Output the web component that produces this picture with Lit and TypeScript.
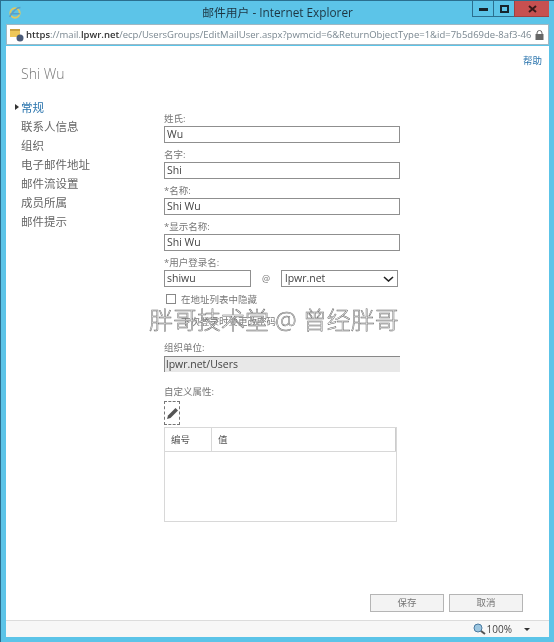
import { LitElement, html, css } from "lit";
import { customElement } from "lit/decorators.js";

const NAV = ["常规", "联系人信息", "组织", "电子邮件地址", "邮件流设置", "成员所属", "邮件提示"];

@customElement("app-root")
export class AppRoot extends LitElement {
  static styles = css`
    :host { display: block; width: 554px; height: 642px; font-family: "Open Sans", "Noto Sans CJK SC", sans-serif; color: #555; font-size: 10.5px; }
    * { box-sizing: border-box; }
    .win { position: relative; width: 554px; height: 642px; background: #5cc4e8; border: 1px solid #2b6f8f; border-width: 1px 0 0 1px; padding: 0 5px 5px 5px; display: flex; flex-direction: column; overflow: hidden; filter: blur(0.45px); }
    .title { height: 23px; flex: none; display: grid; grid-template-columns: 1fr auto 1fr; align-items: start; }
    .ie { margin: 5px 0 0 2px; }
    .title-text { font-size: 11.8px; line-height: 23px; color: #1d3542; }
    .ctrls { justify-self: end; display: flex; margin-right: 0; }
    .ctrl { height: 16px; width: 21px; border: 1px solid #2b6f8f; border-top: 0; border-right: 0; display: flex; align-items: center; justify-content: center; background: #5cc4e8; }
    .ctrl.close { width: 35px; background: #c75050; border-color: #a04040; }
    .addr { flex: none; height: 21px; background: #fff; border: 1px solid #9fb8c4; display: flex; align-items: center; padding: 0 4px 0 3px; gap: 2px; white-space: nowrap; overflow: hidden; font-size: 9.5px; color: #7a8790; }
    .addr b { font-weight: 600; color: #333; }
    .url { flex: 1; overflow: hidden; }
    .page { flex: 1; background: #fff; margin-top: 1px; display: flex; flex-direction: column; min-height: 0; }
    .help-row { display: flex; justify-content: flex-end; padding: 8px 7px 0 0; font-size: 9.5px; line-height: 13px; color: #2a74ad; }
    .name { font-size: 14px; line-height: 20px; color: #777; font-weight: 300; padding-left: 15px; margin-top: -3px; }
    .body { flex: 1; display: flex; min-height: 0; padding-top: 14px; }
    .nav { width: 158px; flex: none; padding: 0 0 0 15px; margin: 0; list-style: none; }
    .nav li { height: 19px; line-height: 19px; font-size: 11.5px; color: #666; position: relative; }
    .nav li.on { color: #2a74ad; }
    .nav li.on::before { content: ""; position: absolute; left: -6px; top: 6px; border-left: 4px solid #333; border-top: 3px solid transparent; border-bottom: 3px solid transparent; }
    .form { flex: 1; padding-top: 13px; display: flex; flex-direction: column; }
    .label { height: 15px; line-height: 15px; font-size: 9.5px; color: #777; }
    .input { height: 17px; border: 1px solid #8f8f8f; line-height: 15px; padding-left: 2px; color: #444; width: 236px; background: #fff; }
    .field { margin-bottom: 4px; }
    .login { display: flex; align-items: center; }
    .login .input { width: 87px; }
    .at { width: 30px; text-align: center; font-size: 9px; color: #777; }
    .select { width: 117px; height: 17px; border: 1px solid #8f8f8f; padding-left: 3px; line-height: 15px; color: #444; display: flex; align-items: center; justify-content: space-between; padding-right: 3px; }
    .check { display: flex; align-items: center; gap: 5px; height: 11px; margin: 6px 0 0 2px; font-size: 9.5px; color: #777; }
    .box { width: 10px; height: 10px; border: 1px solid #888; }
    .check.second { margin-top: 11px; padding-left: 15px; }
    .org-label { margin-top: 14px; }
    .org { height: 16px; width: 236px; background: #e8e8e8; border-top: 1px solid #888; border-left: 1px solid #888; line-height: 15px; padding-left: 1px; color: #444; margin-top: 1px; }
    .custom-label { margin-top: 12px; }
    .pencil { width: 16px; height: 24px; border: 1px dashed #777; margin-top: 2px; display: flex; align-items: center; justify-content: center; }
    .table { width: 233px; height: 95px; border: 1px solid #d8d8d8; margin-top: 2px; }
    .thead { display: flex; height: 24px; border-bottom: 1px solid #d8d8d8; font-size: 9.5px; line-height: 23px; color: #555; }
    .th1 { width: 47px; padding-left: 6px; border-right: 1px solid #d8d8d8; }
    .th2 { flex: 1; padding-left: 6px; border-right: 1px solid #ccc; }
    .actions { flex: none; display: flex; justify-content: flex-end; gap: 5px; padding: 0 26px 8px 0; }
    .btn { width: 74px; height: 18px; border: 1px solid #b5b5b5; background: #f3f3f3; text-align: center; font-size: 9.5px; line-height: 16px; color: #777; }
    .status { flex: none; height: 17px; background: #f7f7f7; border-top: 1px solid #dcdcdc; display: flex; align-items: center; justify-content: flex-end; font-size: 10px; color: #444; padding-right: 19px; gap: 1px; }
    .caret { width: 0; height: 0; border-top: 3px solid #333; border-left: 3px solid transparent; border-right: 3px solid transparent; margin-left: 11px; }
    .mark { position: absolute; left: 148px; top: 306px; font-size: 24px; line-height: 26px; white-space: nowrap; color: #fff; -webkit-text-stroke: 0.5px #666; font-weight: 300; }
  `;

  private field(label: string, value: string) {
    return html`<div class="field"><div class="label">${label}</div><div class="input">${value}</div></div>`;
  }

  render() {
    return html`
      <div class="win">
        <div class="title">
          <svg class="ie" width="14" height="14" viewBox="0 0 18 18">
            <circle cx="9" cy="9" r="6" fill="none" stroke="#e0c860" stroke-width="2.5"/>
            <path d="M3 10h12M2 14C8 4 13 2 16 2" fill="none" stroke="#5a9fc8" stroke-width="2"/>
          </svg>
          <div class="title-text">邮件用户 - Internet Explorer</div>
          <div class="ctrls">
            <div class="ctrl"><svg width="9" height="4"><rect y="1" width="9" height="3" fill="#17242c"/></svg></div>
            <div class="ctrl"><svg width="9" height="8"><rect x="1" y="1" width="7" height="6" fill="none" stroke="#17242c" stroke-width="2"/></svg></div>
            <div class="ctrl close"><svg width="9" height="8"><path d="M1 1l7 6M8 1L1 7" stroke="#3a1a1a" stroke-width="2"/></svg></div>
          </div>
        </div>
        <div class="addr">
          <svg width="14" height="14" viewBox="0 0 14 14" style="flex:none">
            <rect x="0" y="1" width="10" height="8" fill="#eec75a"/><rect x="0" y="1" width="10" height="2" fill="#c8a040"/>
            <circle cx="10" cy="10" r="3.5" fill="#4a5a78"/>
          </svg>
          <div class="url"><b>https</b>://mail.<b>lpwr.net</b>/ecp/UsersGroups/EditMailUser.aspx?pwmcid=6&ReturnObjectType=1&id=7b5d69de-8af3-46</div>
          <svg width="9" height="10" viewBox="0 0 9 10" style="flex:none">
            <rect x="0.5" y="4" width="8" height="6" fill="#666"/><path d="M2 4V3a2.5 2.5 0 0 1 5 0v1" fill="none" stroke="#666"/>
          </svg>
        </div>
        <div class="page">
          <div class="help-row">帮助</div>
          <div class="name">Shi Wu</div>
          <div class="body">
            <ul class="nav">
              ${NAV.map((n, i) => html`<li class=${i === 0 ? "on" : ""}>${n}</li>`)}
            </ul>
            <div class="form">
              ${this.field("姓氏:", "Wu")}
              ${this.field("名字:", "Shi")}
              ${this.field("*名称:", "Shi Wu")}
              ${this.field("*显示名称:", "Shi Wu")}
              <div class="label">*用户登录名:</div>
              <div class="login">
                <div class="input">shiwu</div>
                <div class="at">@</div>
                <div class="select">lpwr.net
                  <svg width="11" height="6" viewBox="0 0 11 6"><path d="M1 1l4.5 4L10 1" fill="none" stroke="#222" stroke-width="1.6"/></svg>
                </div>
              </div>
              <div class="check"><div class="box"></div>在地址列表中隐藏</div>
              <div class="check second">下次登录时要更改密码</div>
              <div class="label org-label">组织单位:</div>
              <div class="org">lpwr.net/Users</div>
              <div class="label custom-label">自定义属性:</div>
              <div class="pencil">
                <svg width="13" height="13" viewBox="0 0 13 13"><path d="M1 12l1-3.5L9.5 1 12 3.5 4.5 11z" fill="#555"/></svg>
              </div>
              <div class="table">
                <div class="thead"><div class="th1">编号</div><div class="th2">值</div></div>
              </div>
            </div>
          </div>
          <div class="actions"><div class="btn">保存</div><div class="btn">取消</div></div>
          <div class="status">
            <svg width="13" height="12" viewBox="0 0 13 12"><circle cx="5" cy="5" r="4" fill="#9cc6e0" stroke="#4a7aa0"/><path d="M8 8l4 3" stroke="#555" stroke-width="2"/></svg>
            100%<div class="caret"></div>
          </div>
        </div>
        <div class="mark">胖哥技术堂 @ 曾经胖哥</div>
      </div>
    `;
  }
}
